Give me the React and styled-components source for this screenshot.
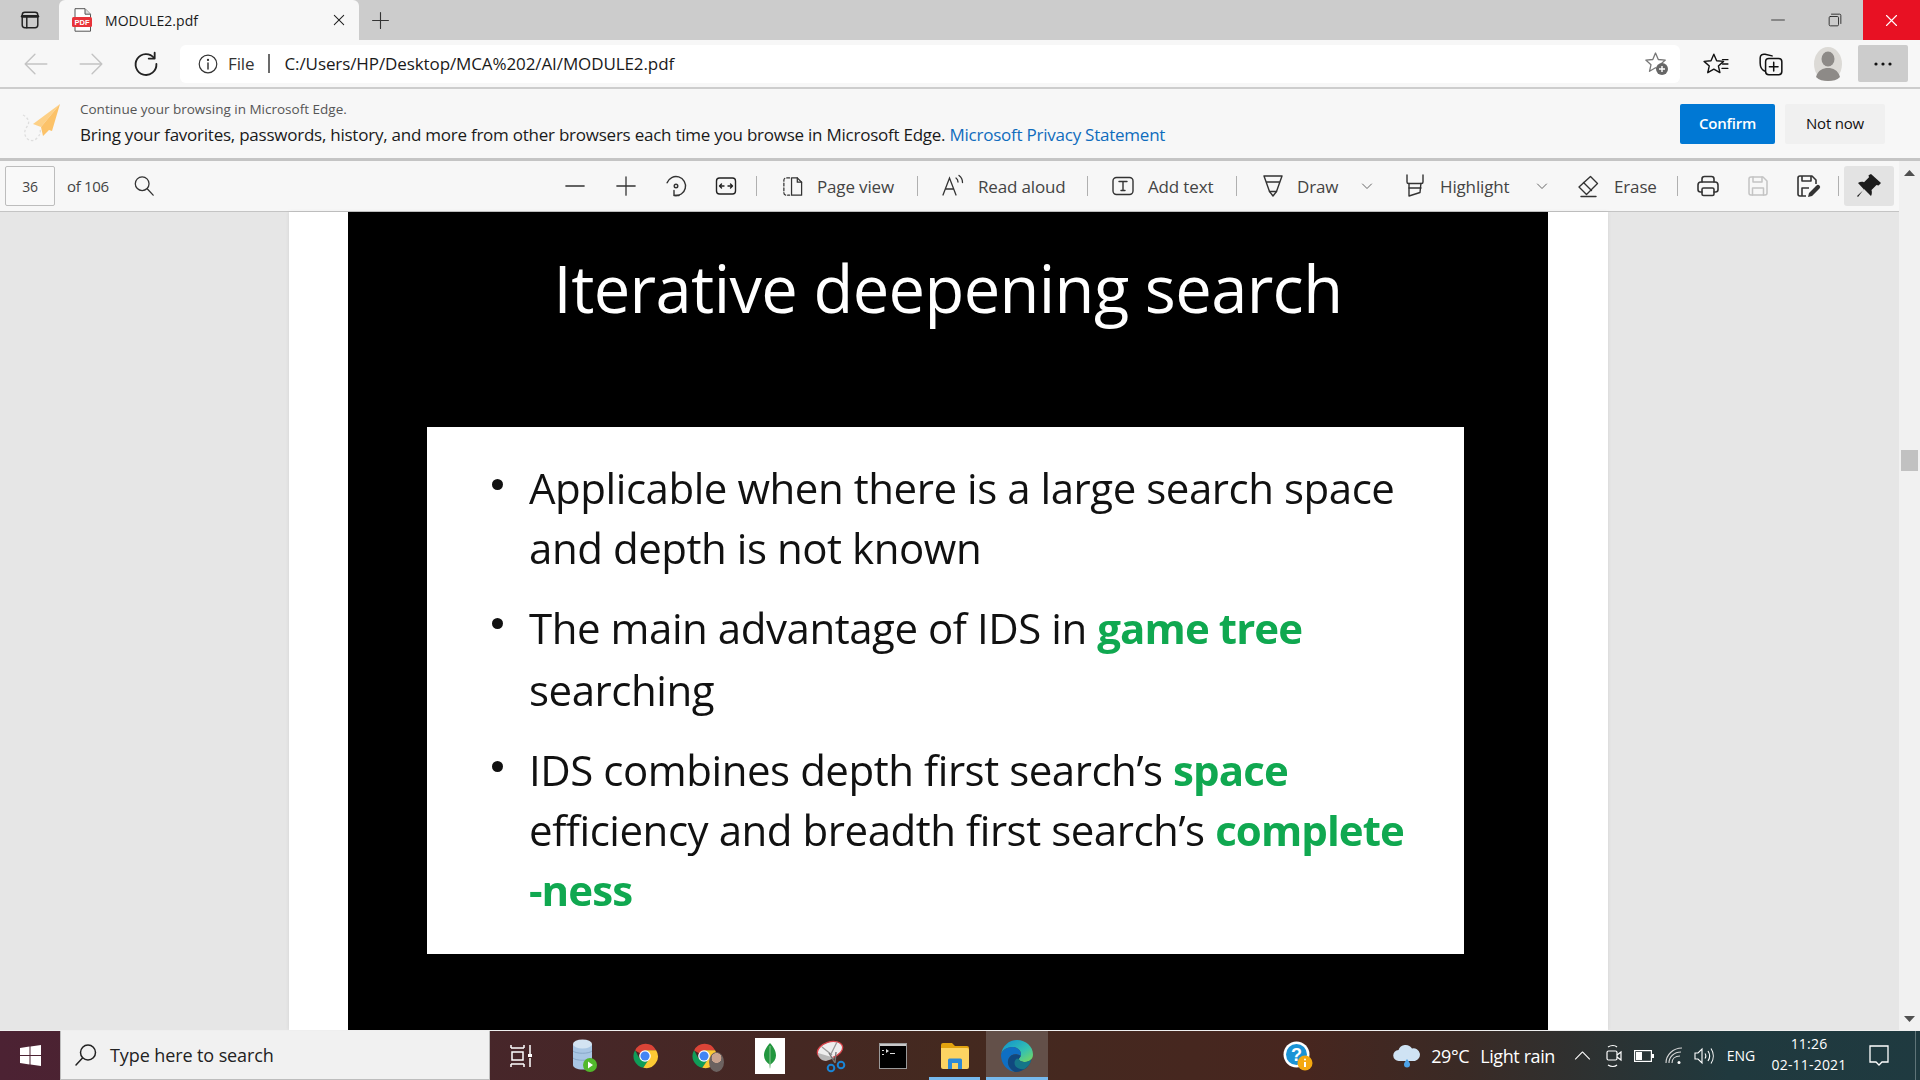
import React from 'react'
import styled, { createGlobalStyle } from 'styled-components'

const UI_FONT = '"Open Sans", "Noto Sans", sans-serif'

const GlobalStyle = createGlobalStyle`
  html, body { margin: 0; padding: 0; height: 100%; overflow: hidden; }
  body { font-family: ${UI_FONT}; color: #1a1a1a; background: #e6e6e6; }
  * { box-sizing: border-box; }
  svg { display: block; flex-shrink: 0; }
`

const Screen = styled.div`
  width: 1920px;
  height: 1080px;
  display: flex;
  flex-direction: column;
  overflow: hidden;
`

/* tab strip */
const TabStrip = styled.div`
  height: 40px;
  flex-shrink: 0;
  display: flex;
  align-items: flex-end;
  background: #cccccc;
`
const SideButton = styled.div`
  width: 59px;
  height: 40px;
  display: flex;
  align-items: center;
  justify-content: center;
`
const Tab = styled.div`
  width: 300px;
  height: 40px;
  display: flex;
  align-items: center;
  background: #f7f7f7;
  border-radius: 6px 6px 0 0;
  padding: 0 13px 0 13px;
  font-size: 14px;
  letter-spacing: 0.05px;
`
const TabTitle = styled.span`
  margin-left: 13px;
  flex: 1;
`
const NewTab = styled.div`
  width: 42px;
  height: 40px;
  display: flex;
  align-items: center;
  justify-content: center;
`
const WindowButtons = styled.div`
  margin-left: auto;
  display: flex;
`
const WindowButton = styled.div`
  width: 57px;
  height: 40px;
  display: flex;
  align-items: center;
  justify-content: center;
  background: ${p => (p.$close ? '#e81123' : 'transparent')};
`

/* address row */
const AddressRow = styled.div`
  height: 49px;
  flex-shrink: 0;
  display: flex;
  align-items: center;
  padding: 0 0 0 8px;
  background: #f7f7f7;
  border-bottom: 2px solid #cdcdcd;
`
const NavSlot = styled.div`
  width: ${p => p.$w || 55}px;
  height: 37px;
  display: flex;
  align-items: center;
  justify-content: center;
  border-radius: 2px;
  background: ${p => (p.$active ? '#cccccc' : 'transparent')};
  margin-left: ${p => p.$ml || 0}px;
  padding-left: ${p => p.$pl || 0}px;
`
const AddressBox = styled.div`
  width: 1500px;
  height: 38px;
  margin-left: 7px;
  margin-right: 8px;
  display: flex;
  align-items: center;
  background: #ffffff;
  border-radius: 6px;
  padding: 0 11px 0 17px;
  font-size: 17px;
  letter-spacing: -0.1px;
`
const FileLabel = styled.span`
  margin-left: 9px;
  color: #333;
`
const AddressSep = styled.span`
  width: 2px;
  height: 19px;
  background: #6b6b6b;
  margin: 0 15px 0 13px;
`
const StarWrap = styled.div`
  margin-left: auto;
`

/* info bar */
const InfoBar = styled.div`
  height: 72px;
  flex-shrink: 0;
  display: flex;
  align-items: center;
  padding: 0 35px 0 20px;
  background: #f7f7f7;
  border-bottom: 3px solid #c4c4c4;
`
const InfoText = styled.div`
  margin: 2px 0 0 18px;
  flex: 1;
`
const InfoSmall = styled.div`
  font-size: 13.5px;
  line-height: 20px;
  color: #555;
  letter-spacing: 0;
`
const InfoMain = styled.div`
  font-size: 17px;
  line-height: 32px;
  letter-spacing: -0.24px;
`
const InfoLink = styled.span`
  color: #0f6cbd;
`
const BarButton = styled.div`
  width: ${p => p.$w}px;
  height: 40px;
  margin-left: ${p => p.$ml || 0}px;
  padding-bottom: 2px;
  display: flex;
  align-items: center;
  justify-content: center;
  border-radius: 2px;
  font-size: 15px;
  letter-spacing: -0.2px;
  font-weight: ${p => (p.$primary ? 600 : 500)};
  color: ${p => (p.$primary ? '#ffffff' : '#111')};
  background: ${p => (p.$primary ? '#0078d4' : '#f0f0f0')};
`

/* work area = pdf toolbar, page and scrollbar */
const WorkArea = styled.div`
  flex: 1;
  min-height: 0;
  display: flex;
`
const ViewerColumn = styled.div`
  flex: 1;
  min-width: 0;
  display: flex;
  flex-direction: column;
`
const PdfToolbar = styled.div`
  height: 51px;
  flex-shrink: 0;
  display: flex;
  align-items: center;
  background: #f7f7f7;
  border-bottom: 1px solid #c4c4c4;
  font-size: 17px;
  letter-spacing: -0.15px;
  color: #444;
`
const PageGroup = styled.div`
  width: 550px;
  display: flex;
  align-items: center;
  padding-left: 5px;
`
const PageBox = styled.div`
  width: 50px;
  height: 40px;
  display: flex;
  align-items: center;
  justify-content: center;
  background: #f9f9f9;
  border: 1px solid #bdbdbd;
  border-radius: 2px;
  font-size: 14px;
  color: #444;
`
const PageCount = styled.span`
  font-size: 15px;
  letter-spacing: -0.3px;
  margin-left: 12px;
  width: 66px;
`
const ToolIcon = styled.div`
  width: ${p => p.$w || 50}px;
  height: 40px;
  display: flex;
  align-items: center;
  justify-content: center;
  border-radius: 3px;
  background: ${p => (p.$active ? '#e3e3e3' : 'transparent')};
`
const ToolSep = styled.span`
  width: 1px;
  height: 20px;
  background: #b0b0b0;
  margin: 0 5px;
`
const LabelTool = styled.div`
  width: ${p => p.$w}px;
  height: 40px;
  display: flex;
  align-items: center;
  padding-left: ${p => p.$pl}px;
  gap: ${p => p.$gap || 13}px;
`
const Chevron = styled.div`
  margin-left: auto;
  margin-right: 12px;
`
const Viewer = styled.div`
  flex: 1;
  min-height: 0;
  display: flex;
  justify-content: center;
  background: #e6e6e6;
  padding-right: 2px;
`
const PageSheet = styled.div`
  width: 1319px;
  padding: 0 60px 0 59px;
  background: #ffffff;
  box-shadow: 0 0 4px rgba(0, 0, 0, 0.08);
`
const Slide = styled.div`
  height: 100%;
  background: #000000;
  padding-left: 79px;
`
const SlideTitle = styled.h1`
  height: 215px;
  margin: 0 0 0 -79px;
  padding-top: 36px;
  text-align: center;
  font-family: "Open Sans", sans-serif;
  font-weight: 400;
  font-size: 65px;
  line-height: 80px;
  letter-spacing: -0.6px;
  color: #ffffff;
  filter: blur(0.3px);
`
const SlideBody = styled.div`
  width: 1037px;
  height: 527px;
  padding: 31px 0 0 66px;
  background: #ffffff;
  font-family: "Open Sans", sans-serif;
  font-size: 42px;
  font-weight: 500;
  color: #111;
  letter-spacing: -0.45px;
  filter: blur(0.45px);
`
const BulletRow = styled.div`
  display: flex;
  line-height: ${p => p.$lh || 60}px;
  margin-bottom: 19px;
`
const BulletDot = styled.span`
  width: 11px;
  height: 11px;
  margin: 21px 26px 0 -1px;
  border-radius: 50%;
  background: #111;
  flex-shrink: 0;
`
const Green = styled.span`
  color: #10a850;
  font-weight: 700;
  letter-spacing: -0.9px;
`
const Scrollbar = styled.div`
  width: 21px;
  flex-shrink: 0;
  display: flex;
  flex-direction: column;
  align-items: center;
  padding: 9px 0 8px;
  background: #f1f1f1;
`
const ScrollThumb = styled.div`
  width: 17px;
  height: 21px;
  margin: 274px 0 auto;
  background: #c1c1c1;
`

/* taskbar */
const Taskbar = styled.div`
  height: 50px;
  flex-shrink: 0;
  display: flex;
  align-items: stretch;
  background: linear-gradient(90deg, #4c2233 0%, #47262a 25%, #44291f 50%, #47261f 68%, #3a2a25 76%, #20393e 90%, #1f3a40 100%);
  color: #ffffff;
  border-top: 1px solid #efefef;
`
const StartButton = styled.div`
  width: 60px;
  display: flex;
  align-items: center;
  justify-content: center;
`
const SearchBox = styled.div`
  width: 430px;
  display: flex;
  align-items: center;
  padding-left: 13px;
  gap: 12px;
  background: #f1f1f1;
  border: 1px solid #bdbdbd;
  border-top: 0;
  font-size: 18px;
  letter-spacing: -0.1px;
  color: #222;
`
const TaskSlot = styled.div`
  width: 62px;
  display: flex;
  align-items: center;
  justify-content: center;
  padding-left: ${p => p.$pl || 0}px;
  background: ${p => (p.$active ? '#635049' : 'transparent')};
  box-shadow: ${p => (p.$open ? 'inset 0 -3px 0 #76b9ed' : 'none')};
  clip-path: ${p => (p.$open && !p.$active ? 'inset(0 6px 0 5px)' : 'none')};
`
const HelpSlot = styled.div`
  width: 48px;
  margin-left: 226px;
  display: flex;
  align-items: center;
  justify-content: center;
`
const Tray = styled.div`
  margin-left: auto;
  display: flex;
  align-items: center;
  font-size: 16px;
`
const Weather = styled.div`
  display: flex;
  align-items: center;
  margin-right: 14px;
  font-size: 18px;
  letter-spacing: -0.4px;
`
const WeatherTemp = styled.span`
  margin: 0 11px 0 10px;
`
const WeatherText = styled.span``
const TrayIcon = styled.div`
  width: ${p => p.$w || 30}px;
  display: flex;
  align-items: center;
  justify-content: center;
  padding-right: ${p => p.$pr || 0}px;
`
const TrayLang = styled.span`
  width: 44px;
  text-align: center;
  font-size: 14px;
`
const Clock = styled.div`
  width: 92px;
  padding-bottom: 3px;
  text-align: center;
  font-size: 14px;
  letter-spacing: 0.2px;
  line-height: 21px;
`
const ShowDesktop = styled.div`
  width: 17px;
  height: 50px;
  background: linear-gradient(90deg, transparent 0 12px, #5f7478 12px 13px, transparent 13px);
`

/* drawings */
const Ico = ({ s = 24, children, ...rest }) => (
  <svg width={s} height={s} viewBox="0 0 24 24" fill="none" stroke="currentColor" strokeWidth="1.5" strokeLinecap="round" strokeLinejoin="round" {...rest}>{children}</svg>
)

const SidebarIcon = () => (
  <Ico s={22} strokeWidth="1.6" color="#222">
    <rect x="3.5" y="3.5" width="17" height="17" rx="3" />
    <path d="M3.5 8h17" strokeWidth="3" />
    <path d="M8.5 8v12.5" />
  </Ico>
)
const PdfIcon = () => (
  <svg width="20" height="24" viewBox="0 0 20 24">
    <path d="M3 .7h10l5.5 5.5v17H3z" fill="#fff" stroke="#555" strokeWidth="1" />
    <path d="M13 .7v5.5h5.5" fill="#ddd" stroke="#555" strokeWidth="1" />
    <rect x="0" y="9" width="20" height="10" rx="1.5" fill="#e8333a" />
    <text x="10" y="17" textAnchor="middle" fontFamily="Liberation Sans" fontSize="7.5" fontWeight="700" fill="#fff">PDF</text>
  </svg>
)
const CloseX = ({ s = 16, c = '#222' }) => (
  <Ico s={s} color={c} strokeWidth="1.8"><path d="M4 4l16 16M20 4L4 20" /></Ico>
)
const PlusIcon = ({ s = 22, c = '#333', w = 1.4 }) => (
  <Ico s={s} color={c} strokeWidth={w}><path d="M12 2v20M2 12h20" /></Ico>
)
const MinusIcon = () => <Ico s={22} color="#333" strokeWidth="1.4"><path d="M2 12h20" /></Ico>
const ArrowLeft = () => <Ico s={26} color="#c4c4c4" strokeWidth="1.3"><path d="M22 12H2M11 3l-9 9 9 9" /></Ico>
const ArrowRight = () => <Ico s={26} color="#c4c4c4" strokeWidth="1.3"><path d="M2 12h20M13 3l9 9-9 9" /></Ico>
const ReloadIcon = () => (
  <Ico s={26} color="#222" strokeWidth="1.7">
    <path d="M19.5 6.5A9.6 9.6 0 1 0 21.6 12" />
    <path d="M20 1.5v5.5h-5.5" />
  </Ico>
)
const InfoIcon = () => (
  <Ico s={22} color="#333" strokeWidth="1.3">
    <circle cx="12" cy="12" r="9.6" />
    <path d="M12 11v6.5" strokeWidth="1.6" />
    <circle cx="12" cy="7.5" r=".6" fill="#333" />
  </Ico>
)
const StarAdd = () => (
  <svg width="24" height="26" viewBox="0 0 24 26" fill="none">
    <path d="M10.5 2l2.8 6.5 7 .6-5.2 4.6 1.5 6.6-6.1-3.6-6 3.6 1.5-6.6L.8 9.1l7-.6z" stroke="#777" strokeWidth="1.3" strokeLinejoin="round" />
    <circle cx="17" cy="18" r="6" fill="#666" />
    <path d="M17 15v6M14 18h6" stroke="#fff" strokeWidth="1.4" />
  </svg>
)
const FavoritesIcon = () => (
  <Ico s={26} color="#111" strokeWidth="1.3">
    <path d="M10 3l2.600 6 6.400.6-4.800 4.200 1.400 6.200-5.600-3.300L4.400 20l1.400-6.200L1 9.600l6.400-.6z" />
    <path d="M18 8h5M18 12h5M17.500 16h5.500" />
  </Ico>
)
const CollectionsIcon = () => (
  <Ico s={26} color="#111" strokeWidth="1.4">
    <path d="M6 18.5C3 17 2 14 2 11V6.500C2 4 4 2.500 6.500 3l6.500 1.500" />
    <rect x="7" y="7" width="15" height="15" rx="3" />
    <path d="M14.500 10.500v8M10.500 14.500h8" />
  </Ico>
)
const Avatar = () => (
  <svg width="30" height="36" viewBox="0 0 30 36">
    <ellipse cx="15" cy="18" rx="14" ry="17" fill="#dcdad6" />
    <ellipse cx="15" cy="13" rx="6.500" ry="7.500" fill="#8d8a87" />
    <path d="M3 31c2-7 7-9 12-9s10 2 12 9c-3 3-7 4-12 4s-9-1-12-4z" fill="#8d8a87" />
  </svg>
)
const DotsIcon = () => (
  <svg width="18" height="4" viewBox="0 0 18 4" fill="#111">
    <circle cx="2" cy="2" r="1.600" /><circle cx="9" cy="2" r="1.600" /><circle cx="16" cy="2" r="1.600" />
  </svg>
)
const PlaneArt = () => (
  <svg width="42" height="42" viewBox="0 0 42 42" fill="none">
    <path d="M3 12c4 2 7 6 5 10-2 3-5 7-2 12 2 4 8 5 11 1 3-3 4-6 3-9" stroke="#dedede" strokeWidth="1.300" strokeDasharray="2.500 2" />
    <path d="M40 1L13 21l8 3z" fill="#fdd086" />
    <path d="M40 1L21 24l2 9 6-6 3 1z" fill="#fcc268" />
  </svg>
)
const SearchIcon = ({ s = 22, c = '#333', w = 1.4 }) => (
  <Ico s={s} color={c} strokeWidth={w}>
    <circle cx="10" cy="9.500" r="7.500" />
    <path d="M15.500 15l6.500 7" />
  </Ico>
)
const TaskSearchIcon = () => (
  <Ico s={24} color="#222" strokeWidth="1.500">
    <circle cx="14" cy="9.500" r="7.500" />
    <path d="M8.500 15L2 22" />
  </Ico>
)
const RotateIcon = () => (
  <Ico s={24} color="#333" strokeWidth="1.400">
    <path d="M3.100 8.800A9.500 9.500 0 1 1 10.400 21.400" />
    <path d="M10 16.500v5h5" />
    <circle cx="12" cy="12" r="1.800" />
  </Ico>
)
const FitIcon = () => (
  <Ico s={24} color="#222" strokeWidth="1.400">
    <rect x="2.500" y="4" width="19" height="16" rx="3" />
    <path d="M5.500 12h4.500M7.500 10l-2 2 2 2M14 12h4.500M16.500 10l2 2-2 2" />
  </Ico>
)
const PageViewIcon = () => (
  <Ico s={23} color="#333" strokeWidth="1.300">
    <path d="M9 3H5.500A2.500 2.500 0 0 0 3 5.500v13A2.500 2.500 0 0 0 5.500 21H9" strokeDasharray="3 2" />
    <path d="M11 3h6l4.500 4.500V21H11z" />
    <path d="M17 3v4.500h4.500" />
  </Ico>
)
const ReadAloudIcon = () => (
  <svg width="24" height="24" viewBox="0 0 24 24" fill="none" stroke="#333" strokeWidth="1.300" strokeLinecap="round">
    <path d="M2 21L8.500 4 15 21M4.500 15h8" />
    <path d="M15 4c1.500 1 2 2 2 4M18 1.500c2 1.500 3.500 3.500 3.500 7" />
  </svg>
)
const AddTextIcon = () => (
  <Ico s={24} color="#333" strokeWidth="1.400">
    <rect x="2" y="3.500" width="20" height="17" rx="3.500" />
    <path d="M8 7.500h8M12 7.500v9M10 16.500h4" />
  </Ico>
)
const DrawIcon = () => (
  <Ico s={24} color="#333" strokeWidth="1.400">
    <path d="M3 2l5.500 15.500L12 22l3.500-4.500L21 2M3 2h18M5.500 8h13" />
    <path d="M8.500 17.500h7" />
  </Ico>
)
const HighlightIcon = () => (
  <Ico s={24} color="#333" strokeWidth="1.400">
    <path d="M4 1v7c0 1 .5 1.500 1.500 1.500h13c1 0 1.500-.5 1.500-1.500V1" />
    <path d="M6 9.500v12.500l11-3.500.9-9" />
    <path d="M6 14h12" />
  </Ico>
)
const EraseIcon = () => (
  <Ico s={24} color="#333" strokeWidth="1.400">
    <path d="M14.500 2.500l7 7-11 11L3 13z" />
    <path d="M7.500 8.500l8 8M5 22.500h15" />
  </Ico>
)
const ChevronIcon = () => <Ico s={12} color="#555" strokeWidth="1.800"><path d="M3 8l9 9 9-9" /></Ico>
const PrintIcon = () => (
  <Ico s={24} color="#333" strokeWidth="1.600">
    <path d="M6 8V5a2.500 2.500 0 0 1 2.500-2.500h7A2.500 2.500 0 0 1 18 5v3" />
    <path d="M6 18H4.500A2.500 2.500 0 0 1 2 15.500V11a3 3 0 0 1 3-3h14a3 3 0 0 1 3 3v4.500a2.500 2.500 0 0 1-2.500 2.500H18" />
    <rect x="6" y="14" width="12" height="7.500" rx="1.500" />
  </Ico>
)
const SaveIcon = ({ c = '#c4c4c4' }) => (
  <Ico s={24} color={c} strokeWidth="1.500">
    <path d="M3 5a2 2 0 0 1 2-2h12l4 4v12a2 2 0 0 1-2 2H5a2 2 0 0 1-2-2z" />
    <path d="M7 3v5h9V3M6.500 21v-7h11v7" />
  </Ico>
)
const SaveAsIcon = () => (
  <svg width="26" height="26" viewBox="0 0 26 26" fill="none" stroke="#333" strokeWidth="1.600" strokeLinejoin="round">
    <path d="M11 23H5a2 2 0 0 1-2-2V5a2 2 0 0 1 2-2h12l4 4v4" />
    <path d="M7 3v5h9V3M7 23v-8h7" />
    <path d="M13 24l1-4 7.500-7.500a1.800 1.800 0 0 1 3 3L17 23z" fill="#333" stroke="none" />
  </svg>
)
const PinIcon = () => (
  <svg width="26" height="26" viewBox="0 0 26 26">
    <path d="M15 1l10 9-2.500 2.500-2-.5-5 5c.8 2.500.2 5-.5 6L8 16 2 24l-1-1 7-6.500-6-6.500c2-1.200 4-1.500 6-.7l5-5-.5-2z" fill="#1d1d1d" />
  </svg>
)
const WindowsLogo = () => (
  <svg width="21" height="21" viewBox="0 0 21 21" fill="#fff">
    <path d="M0 3l9.500-1.400V10H0zM10.500 1.400L21 0v10H10.500zM0 11h9.500v8.400L0 18zM10.500 11H21v10l-10.500-1.500z" />
  </svg>
)
const TaskViewIcon = () => (
  <svg width="22" height="24" viewBox="0 0 22 24" fill="none" stroke="#fff" strokeWidth="1.500">
    <path d="M1 4h13M1 1v3M14 1v3M1 20h13M1 23v-3M14 23v-3" />
    <rect x="2" y="8" width="11" height="8" />
    <path d="M20 1v9M20 14v9" />
    <rect x="18" y="10" width="4" height="3" fill="#fff" stroke="none" />
  </svg>
)
const DbIcon = () => (
  <svg width="26" height="34" viewBox="0 0 26 34">
    <path d="M1 5v21c0 2.500 4 4.500 9.500 4.500S20 28.500 20 26V5z" fill="#a9c6e4" />
    <ellipse cx="10.500" cy="5" rx="9.500" ry="4.500" fill="#d3e3f2" />
    <path d="M1 12c3 3 16 3 19 0M1 19c3 3 16 3 19 0" fill="none" stroke="#7f9fc0" strokeWidth=".8" />
    <circle cx="18" cy="26" r="7" fill="#52b82b" />
    <path d="M16 22.500v7l5-3.500z" fill="#fff" />
  </svg>
)
const ChromeIcon = ({ s = 28 }) => (
  <svg width={s} height={s} viewBox="0 0 48 48">
    <path d="M24 24L7 14.500A20 20 0 0 1 43 14H24z" fill="#db4437" />
    <path d="M24 24l-9.700 4L7 14A20 20 0 0 0 21 44l10-13z" fill="#0f9d58" />
    <path d="M24 14h19a20 20 0 0 1-22 30l11-16z" fill="#fcc934" />
    <circle cx="24" cy="24" r="10" fill="#fff" />
    <circle cx="24" cy="24" r="7.800" fill="#4285f4" />
  </svg>
)
const ProfileChrome = styled.div`
  display: flex;
  align-items: flex-end;
`
const ProfileBadge = styled.span`
  width: 15px;
  height: 20px;
  border-radius: 50%;
  background: radial-gradient(circle at 50% 30%, #c9a38f 0 30%, #6c6260 32% 100%);
  margin-left: -9px;
  margin-bottom: -2px;
`
const MongoIcon = () => (
  <svg width="30" height="36" viewBox="0 0 30 36">
    <rect width="30" height="36" fill="#fff" />
    <path d="M15 5c4.500 5 6 9 6 12.500 0 4-2.500 7-5.500 9L15 31l-.5-4.500c-3-2-5.500-5-5.500-9C9 14 10.500 10 15 5z" fill="#23973f" />
    <path d="M15 8v22" stroke="#b8d8b8" strokeWidth=".7" />
  </svg>
)
const SnipIcon = () => (
  <svg width="30" height="34" viewBox="0 0 30 34" fill="none">
    <ellipse cx="14" cy="11" rx="13" ry="8" transform="rotate(-18 14 11)" fill="#eee" stroke="#d8434a" strokeWidth="1.300" />
    <path d="M2 14c0 4 3 8 8 8l9-3" fill="#b7b7b7" />
    <path d="M6 8l10 8M21 3l-6 12" stroke="#999" strokeWidth="1.300" />
    <path d="M13 14l6 10M20 13l-1 11" stroke="#777" strokeWidth="1.400" />
    <circle cx="15" cy="29" r="3.300" stroke="#1a85d6" strokeWidth="2" />
    <circle cx="25" cy="26" r="3.300" stroke="#1a85d6" strokeWidth="2" />
  </svg>
)
const CmdIcon = () => (
  <svg width="28" height="26" viewBox="0 0 28 26">
    <rect x=".5" y=".5" width="27" height="25" fill="#000" stroke="#9a9a9a" />
    <rect x="1" y="1" width="26" height="2" fill="#c9c9c9" />
    <path d="M3 7h2v1H3zM3 11h2v1H3zM7 6l3 2-3 2zM11 10h5v1h-5z" fill="#ddd" />
  </svg>
)
const FolderIcon = () => (
  <svg width="28" height="26" viewBox="0 0 28 26">
    <path d="M0 2a2 2 0 0 1 2-2h9l3 3h12a2 2 0 0 1 2 2v4H0z" fill="#e2a30f" />
    <path d="M0 5h26a2 2 0 0 1 2 2v17a2 2 0 0 1-2 2H2a2 2 0 0 1-2-2z" fill="#fcd462" />
    <path d="M7 26v-9a1.500 1.500 0 0 1 1.500-1.500h11A1.500 1.500 0 0 1 21 17v9h-4v-6h-6v6z" fill="#2d8ad6" />
  </svg>
)
const EdgeIcon = () => (
  <svg width="32" height="32" viewBox="0 0 32 32">
    <defs>
      <linearGradient id="edgeTop" x1="0" y1="0" x2="1" y2="1">
        <stop offset="0" stopColor="#0c8fd3" />
        <stop offset=".6" stopColor="#35c1b0" />
        <stop offset="1" stopColor="#7ed957" />
      </linearGradient>
    </defs>
    <path d="M16 0c9 0 16 6.500 16 14.500 0 5-4 7.500-8 7.500-3 0-6-1-6-3 0-1 2-1.500 2-5 0-4-4-7-8.500-7C5 7 .5 11 0 15 1 6 8 0 16 0z" fill="url(#edgeTop)" />
    <path d="M0 15c.5-4 5-8 11.500-8 4.500 0 8.500 3 8.500 7 0 .8-.1 1.500-.3 2-3.500-3-10-2-12 2.500C5.500 23 8 29 14 32 6 31 0 24 0 15z" fill="#0f6fc3" />
    <path d="M7.700 18.500c2-4.500 8.500-5.500 12-2.500-1 1.500-1.700 2-1.700 3 0 2 3 3 6 3 2.500 0 5-1 6.500-3-1 7-8 13-16 13h-.5c-6-3-8.500-9-6.300-13.500z" fill="#10487f" />
    <path d="M18 19c0 2 3 3 6 3 2.500 0 5-1 6.500-3-1 5-4 8-7 10-4 1-10-1-10-6 0-2 1-3.500 2.500-4.500z" fill="#1a9a8f" opacity=".55" />
  </svg>
)
const HelpIcon = () => (
  <svg width="30" height="30" viewBox="0 0 30 30">
    <circle cx="13.500" cy="13.500" r="13" fill="#fff" />
    <circle cx="13.500" cy="13.500" r="10.500" fill="#1a93d6" />
    <text x="13.500" y="20" textAnchor="middle" fontFamily="Liberation Sans" fontSize="18" fontWeight="700" fill="#fff">?</text>
    <circle cx="22" cy="22" r="7.500" fill="#f5a80f" />
    <path d="M22 21v5" stroke="#fff" strokeWidth="2" />
    <circle cx="22" cy="18.500" r="1" fill="#fff" />
  </svg>
)
const CloudIcon = () => (
  <svg width="28" height="26" viewBox="0 0 28 26">
    <path d="M6 18a5.500 5.500 0 0 1-.5-11A7.500 7.500 0 0 1 19 5.500 6.300 6.300 0 0 1 22 18z" fill="#cfe3f4" />
    <path d="M14 16c2 2.500 3 4 3 5.500a3 3 0 0 1-6 0c0-1.500 1-3 3-5.500z" fill="#4da3e8" />
  </svg>
)
const TrayChevron = () => <Ico s={17} color="#fff" strokeWidth="1.500"><path d="M2 17L12 7l10 10" /></Ico>
const MeetIcon = () => (
  <svg width="16" height="24" viewBox="0 0 16 24" fill="none" stroke="#fff" strokeWidth="1.200">
    <path d="M2 3c3-2 7-2 9 0M2 21c3 2 7 2 9 0" />
    <rect x="1" y="7" width="10" height="9" rx="1.500" />
    <path d="M11 11l4-3v8l-4-3" />
  </svg>
)
const BatteryIcon = () => (
  <svg width="20" height="12" viewBox="0 0 20 12">
    <rect x=".6" y=".6" width="16.800" height="10.800" fill="none" stroke="#fff" strokeWidth="1.200" />
    <rect x="2" y="2" width="6" height="8" fill="#fff" />
    <rect x="18" y="4" width="2" height="4" fill="#fff" />
  </svg>
)
const WifiIcon = () => (
  <svg width="18" height="18" viewBox="0 0 18 18" fill="none" stroke="#d8d8d8" strokeWidth="1.100">
    <path d="M1 16C1 8 8 1 17 1M4 16c0-6 5-11 12-11M7 16c0-4 3-7 8-7" />
    <circle cx="14" cy="15.500" r="1.500" fill="#fff" stroke="none" />
  </svg>
)
const SpeakerIcon = () => (
  <svg width="20" height="18" viewBox="0 0 20 18" fill="none" stroke="#fff" strokeWidth="1.100">
    <path d="M1 6h3l4-4v14l-4-4H1z" />
    <path d="M11 6.500c1 1.500 1 3.500 0 5M14 4c2 3 2 7 0 10M17 1.500c3 4.500 3 10.500 0 15" />
  </svg>
)
const NotifyIcon = () => (
  <svg width="20" height="22" viewBox="0 0 20 22" fill="none" stroke="#fff" strokeWidth="1.300">
    <path d="M1 1h18v16h-6l-3 3-3-3H1z" />
  </svg>
)

const App = () => {
  return (
    <Screen>
      <GlobalStyle />

      <TabStrip>
        <SideButton><SidebarIcon /></SideButton>
        <Tab>
          <PdfIcon />
          <TabTitle>MODULE2.pdf</TabTitle>
          <CloseX s={14} />
        </Tab>
        <NewTab><PlusIcon s={19} /></NewTab>
        <WindowButtons>
          <WindowButton><Ico s={14} color="#222" strokeWidth="1.400"><path d="M1 12h22" /></Ico></WindowButton>
          <WindowButton>
            <Ico s={14} color="#222" strokeWidth="1.500">
              <rect x="2" y="6" width="16" height="16" rx="2" />
              <path d="M6 2h14a2 2 0 0 1 2 2v14" />
            </Ico>
          </WindowButton>
          <WindowButton $close><CloseX s={15} c="#fff" /></WindowButton>
        </WindowButtons>
      </TabStrip>

      <AddressRow>
        <NavSlot><ArrowLeft /></NavSlot>
        <NavSlot><ArrowRight /></NavSlot>
        <NavSlot><ReloadIcon /></NavSlot>
        <AddressBox>
          <InfoIcon />
          <FileLabel>File</FileLabel>
          <AddressSep />
          <span>C:/Users/HP/Desktop/MCA%202/AI/MODULE2.pdf</span>
          <StarWrap><StarAdd /></StarWrap>
        </AddressBox>
        <NavSlot><FavoritesIcon /></NavSlot>
        <NavSlot><CollectionsIcon /></NavSlot>
        <NavSlot $pl={4}><Avatar /></NavSlot>
        <NavSlot $w={50} $ml={5} $active><DotsIcon /></NavSlot>
      </AddressRow>

      <InfoBar>
        <PlaneArt />
        <InfoText>
          <InfoSmall>Continue your browsing in Microsoft Edge.</InfoSmall>
          <InfoMain>
            Bring your favorites, passwords, history, and more from other browsers each time you browse in Microsoft Edge. <InfoLink>Microsoft Privacy Statement</InfoLink>
          </InfoMain>
        </InfoText>
        <BarButton $primary $w={95}>Confirm</BarButton>
        <BarButton $w={100} $ml={10}>Not now</BarButton>
      </InfoBar>

      <WorkArea>
        <ViewerColumn>
          <PdfToolbar>
            <PageGroup>
              <PageBox>36</PageBox>
              <PageCount>of 106</PageCount>
              <SearchIcon />
            </PageGroup>
            <ToolIcon><MinusIcon /></ToolIcon>
            <ToolIcon $w={51}><PlusIcon /></ToolIcon>
            <ToolIcon><RotateIcon /></ToolIcon>
            <ToolIcon><FitIcon /></ToolIcon>
            <ToolSep />
            <LabelTool $w={150} $pl={19}><PageViewIcon />Page view</LabelTool>
            <ToolSep />
            <LabelTool $w={159} $pl={18}><ReadAloudIcon />Read aloud</LabelTool>
            <ToolSep />
            <LabelTool $w={138} $pl={18}><AddTextIcon />Add text</LabelTool>
            <ToolSep />
            <LabelTool $w={143} $pl={19} $gap={12}><DrawIcon />Draw<Chevron><ChevronIcon /></Chevron></LabelTool>
            <LabelTool $w={175} $pl={18} $gap={13}><HighlightIcon />Highlight<Chevron><ChevronIcon /></Chevron></LabelTool>
            <LabelTool $w={112} $pl={16} $gap={14}><EraseIcon />Erase</LabelTool>
            <ToolSep />
            <ToolIcon><PrintIcon /></ToolIcon>
            <ToolIcon><SaveIcon /></ToolIcon>
            <ToolIcon><SaveAsIcon /></ToolIcon>
            <ToolSep />
            <ToolIcon $active><PinIcon /></ToolIcon>
          </PdfToolbar>
          <Viewer>
            <PageSheet>
              <Slide>
                <SlideTitle>Iterative deepening search</SlideTitle>
                <SlideBody>
                  <BulletRow>
                    <BulletDot />
                    <div>Applicable when there is a large search space<br />and depth is not known</div>
                  </BulletRow>
                  <BulletRow $lh={62}>
                    <BulletDot />
                    <div>The main advantage of IDS in <Green>game tree</Green><br />searching</div>
                  </BulletRow>
                  <BulletRow>
                    <BulletDot />
                    <div>IDS combines depth first search’s <Green>space</Green><br />efficiency and breadth first search’s <Green>complete</Green><br /><Green>-ness</Green></div>
                  </BulletRow>
                </SlideBody>
              </Slide>
            </PageSheet>
          </Viewer>
        </ViewerColumn>
        <Scrollbar>
          <svg width="11" height="6" viewBox="0 0 11 6"><path d="M5.500 0L11 6H0z" fill="#505050" /></svg>
          <ScrollThumb />
          <svg width="11" height="6" viewBox="0 0 11 6"><path d="M5.500 6L11 0H0z" fill="#505050" /></svg>
        </Scrollbar>
      </WorkArea>

      <Taskbar>
        <StartButton><WindowsLogo /></StartButton>
        <SearchBox>
          <TaskSearchIcon />
          Type here to search
        </SearchBox>
        <TaskSlot><TaskViewIcon /></TaskSlot>
        <TaskSlot $pl={3}><DbIcon /></TaskSlot>
        <TaskSlot><ChromeIcon /></TaskSlot>
        <TaskSlot><ProfileChrome><ChromeIcon /><ProfileBadge /></ProfileChrome></TaskSlot>
        <TaskSlot $pl={1}><MongoIcon /></TaskSlot>
        <TaskSlot><SnipIcon /></TaskSlot>
        <TaskSlot><CmdIcon /></TaskSlot>
        <TaskSlot $open><FolderIcon /></TaskSlot>
        <TaskSlot $open $active><EdgeIcon /></TaskSlot>
        <HelpSlot><HelpIcon /></HelpSlot>
        <Tray>
          <Weather>
            <CloudIcon />
            <WeatherTemp>29°C</WeatherTemp>
            <WeatherText>Light rain</WeatherText>
          </Weather>
          <TrayIcon $pr={4}><TrayChevron /></TrayIcon>
          <TrayIcon><MeetIcon /></TrayIcon>
          <TrayIcon><BatteryIcon /></TrayIcon>
          <TrayIcon><WifiIcon /></TrayIcon>
          <TrayIcon><SpeakerIcon /></TrayIcon>
          <TrayLang>ENG</TrayLang>
          <Clock>11:26<br />02-11-2021</Clock>
          <TrayIcon $w={48}><NotifyIcon /></TrayIcon>
          <ShowDesktop />
        </Tray>
      </Taskbar>
    </Screen>
  )
}

export default App
